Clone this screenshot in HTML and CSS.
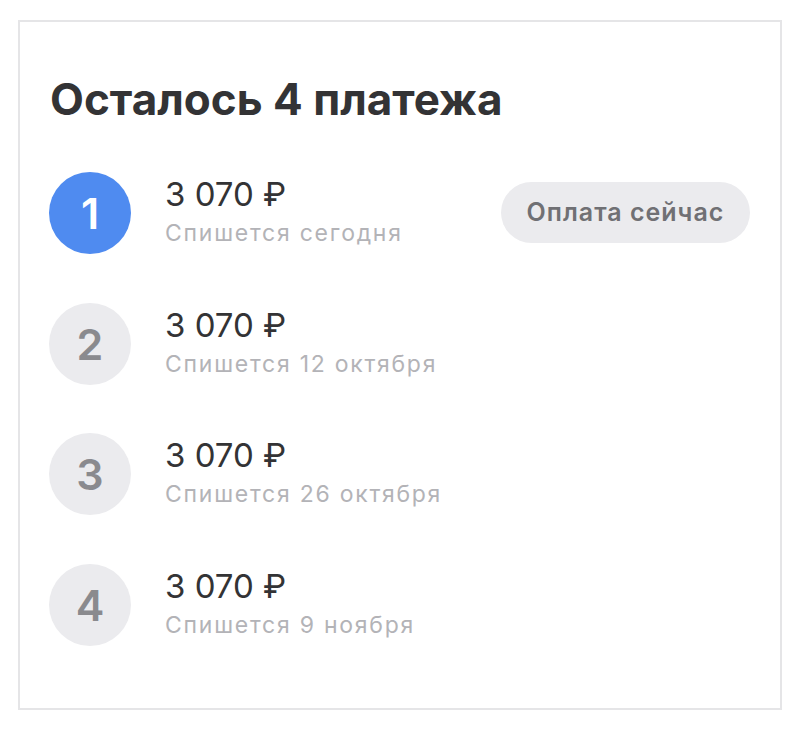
FILE: index.html
```html
<!DOCTYPE html>
<html lang="ru">
<head>
<meta charset="utf-8">
<link rel="stylesheet" href="styles.css">
</head>
<body>
<div class="card">
  <h1 class="title">Осталось 4 платежа</h1>
  <ul class="list">
    <li class="row">
      <div class="num num-active">1</div>
      <div class="info">
        <div class="amount">3 070 ₽</div>
        <div class="date">Спишется сегодня</div>
      </div>
      <div class="pill">Оплата сейчас</div>
    </li>
    <li class="row">
      <div class="num">2</div>
      <div class="info">
        <div class="amount">3 070 ₽</div>
        <div class="date">Спишется 12 октября</div>
      </div>
    </li>
    <li class="row">
      <div class="num">3</div>
      <div class="info">
        <div class="amount">3 070 ₽</div>
        <div class="date">Спишется 26 октября</div>
      </div>
    </li>
    <li class="row">
      <div class="num">4</div>
      <div class="info">
        <div class="amount">3 070 ₽</div>
        <div class="date">Спишется 9 ноября</div>
      </div>
    </li>
  </ul>
</div>
</body>
</html>
```
FILE: styles.css
```css
html, body {
  margin: 0;
  padding: 0;
  background: #ffffff;
}
body {
  font-family: Inter, "Noto Sans", sans-serif;
  color: #333333;
}
.card {
  box-sizing: border-box;
  margin: 20px 0 0 18px;
  width: 764px;
  height: 690px;
  border: 2px solid #e5e5e7;
  padding: 51px 29px 0 29px;
}
.title {
  margin: 0;
  font-size: 44px;
  line-height: 52px;
  font-weight: 700;
  color: #333335;
  padding-left: 1px;
}
.list {
  list-style: none;
  margin: 47px 0 0 0;
  padding: 0;
  display: flex;
  flex-direction: column;
  gap: 48.5px;
}
.row {
  display: flex;
  align-items: center;
  height: 82px;
}
.num {
  width: 82px;
  height: 82px;
  border-radius: 50%;
  background: #ebebee;
  color: #8a8a8e;
  font-size: 43px;
  font-weight: 600;
  display: flex;
  align-items: center;
  justify-content: center;
  flex-shrink: 0;
}
.num-active {
  background: #4f8bf0;
  color: #ffffff;
}
.info {
  margin-left: 34px;
  flex: 1;
  display: flex;
  flex-direction: column;
}
.amount {
  font-size: 33px;
  line-height: 32px;
  color: #333335;
}
.date {
  margin-top: 8px;
  font-size: 23px;
  line-height: 30px;
  letter-spacing: 1.75px;
  color: #b3b3b7;
}
.pill {
  box-sizing: border-box;
  height: 61px;
  width: 249px;
  border-radius: 31px;
  background: #ebebee;
  color: #707074;
  font-size: 25px;
  font-weight: 600;
  letter-spacing: 1px;
  display: flex;
  align-items: center;
  justify-content: center;
  margin-right: 1px;
  margin-top: -2px;
}
```
